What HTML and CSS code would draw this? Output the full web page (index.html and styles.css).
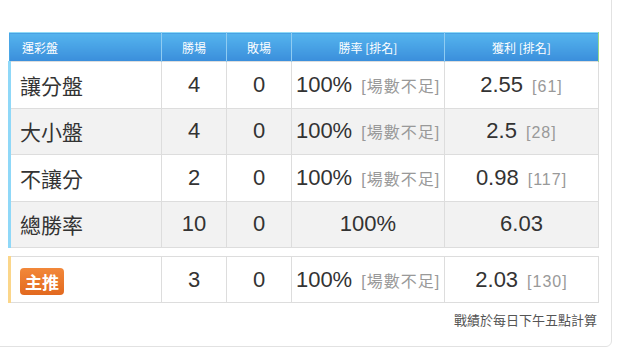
FILE: index.html
```html
<!DOCTYPE html>
<html lang="zh-Hant">
<head>
<meta charset="utf-8">
<link rel="stylesheet" href="styles.css">
</head>
<body>
<div class="card">
  <table class="stats">
    <colgroup>
      <col class="c1"><col class="c2"><col class="c3"><col class="c4"><col class="c5">
    </colgroup>
    <thead>
      <tr>
        <th class="name">運彩盤</th>
        <th>勝場</th>
        <th>敗場</th>
        <th>勝率 [排名]</th>
        <th>獲利 [排名]</th>
      </tr>
    </thead>
    <tbody>
      <tr>
        <td class="name">讓分盤</td>
        <td>4</td>
        <td>0</td>
        <td>100%<span class="rank">[場數不足]</span></td>
        <td>2.55<span class="rank">[61]</span></td>
      </tr>
      <tr class="alt">
        <td class="name">大小盤</td>
        <td>4</td>
        <td>0</td>
        <td>100%<span class="rank">[場數不足]</span></td>
        <td>2.5<span class="rank">[28]</span></td>
      </tr>
      <tr>
        <td class="name">不讓分</td>
        <td>2</td>
        <td>0</td>
        <td>100%<span class="rank">[場數不足]</span></td>
        <td>0.98<span class="rank">[117]</span></td>
      </tr>
      <tr class="alt">
        <td class="name">總勝率</td>
        <td>10</td>
        <td>0</td>
        <td>100%</td>
        <td>6.03</td>
      </tr>
    </tbody>
  </table>

  <table class="stats main">
    <colgroup>
      <col class="c1"><col class="c2"><col class="c3"><col class="c4"><col class="c5">
    </colgroup>
    <tbody>
      <tr>
        <td class="name"><span class="badge">主推</span></td>
        <td>3</td>
        <td>0</td>
        <td>100%<span class="rank">[場數不足]</span></td>
        <td>2.03<span class="rank">[130]</span></td>
      </tr>
    </tbody>
  </table>

  <p class="note">戰績於每日下午五點計算</p>
</div>
</body>
</html>
```

FILE: styles.css
```css
html, body {
  margin: 0;
  padding: 0;
  background: #ffffff;
}

body {
  font-family: "Liberation Sans", "Noto Sans CJK TC", sans-serif;
  color: #333333;
  overflow: hidden;
}

.card {
  box-sizing: border-box;
  width: 622px;
  margin: -10px 0 0 -10px;
  padding: 41px 14px 0 17px;
  border: 1px solid #e2e2e2;
  border-radius: 0 0 6px 0;
  height: 357px;
}

.stats {
  width: 589px;
  table-layout: fixed;
  border-collapse: collapse;
}

.c1 { width: 152px; }
.c2 { width: 65px; }
.c3 { width: 65px; }
.c4 { width: 153px; }
.c5 { width: 154px; }

.stats th {
  height: 28px;
  padding: 0;
  font-family: "Noto Sans CJK TC", sans-serif;
  font-size: 12px;
  font-weight: normal;
  color: #ffffff;
  text-align: center;
  background: linear-gradient(#55b4ee, #3a8edb);
  border-top: 1px solid #8fdaf6;
  border-left: 1px solid #8fccf2;
  border-right: 1px solid #8fccf2;
}

.stats th:first-child {
  border-left: 1px solid #4aa6e6;
}

.stats th:last-child {
  border-right: 1px solid #98d88a;
}

.stats th.name {
  text-align: left;
  padding-left: 12px;
}

.stats td {
  height: 45.5px;
  padding: 0;
  font-size: 22px;
  text-align: center;
  white-space: nowrap;
  border: 1px solid #dddddd;
}

.stats td.name {
  text-align: left;
  padding-left: 9px;
  border-left: 3px solid #8fd8f8;
  font-family: "Noto Sans CJK TC", sans-serif;
  font-size: 21px;
}

.stats tr.alt td {
  background: #f2f2f2;
}

.rank {
  margin-left: 9px;
  font-family: "Liberation Sans", "Noto Sans CJK TC", sans-serif;
  font-size: 16px;
  color: #999999;
  letter-spacing: 1px;
}

.main {
  margin-top: 8px;
}

.main td {
  height: 45px;
}

.main td.name {
  border-left-color: #fbd68a;
}

.badge {
  display: inline-block;
  vertical-align: middle;
  width: 44px;
  height: 27px;
  line-height: 27px;
  text-align: center;
  border-radius: 4px;
  background: linear-gradient(#f2883a, #e2691f);
  color: #ffffff;
  font-family: "Noto Sans CJK TC", sans-serif;
  font-weight: bold;
  font-size: 17px;
}

.note {
  margin: 8px 0 0;
  width: 589px;
  text-align: right;
  font-family: "Noto Sans CJK TC", sans-serif;
  font-size: 13px;
  line-height: 18px;
  color: #555555;
}
```
